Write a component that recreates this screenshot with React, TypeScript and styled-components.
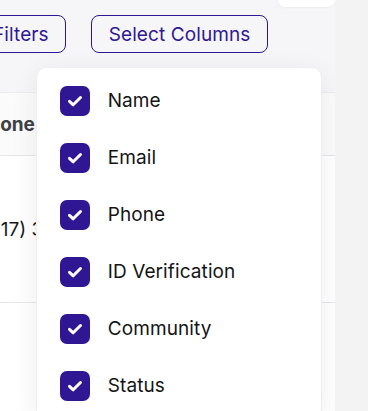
import React, { useState } from 'react';
import styled, { createGlobalStyle } from 'styled-components';

const GlobalStyle = createGlobalStyle`
  html, body {
    margin: 0;
    padding: 0;
    background: #f3f3f4;
    font-family: Inter, "Liberation Sans", sans-serif;
  }
`;

const Page = styled.div`
  position: relative;
  width: 335px;
  height: 411px;
  overflow: hidden;
  background: #f6f6f8;
`;

const TopStrip = styled.div`
  height: 7px;
  display: flex;
`;

const SearchStub = styled.div`
  margin-left: 278px;
  width: 57px;
  height: 7px;
  background: #fff;
  border-radius: 0 0 10px 10px;
  box-shadow: 0 1px 2px rgba(0, 0, 0, 0.05);
`;

const Toolbar = styled.div`
  display: flex;
  align-items: flex-start;
  gap: 25px;
  margin-top: 8px;
  margin-left: -24px;
`;

const OutlineButton = styled.button<{ $wide?: boolean }>`
  height: 38px;
  padding: 0 ${p => (p.$wide ? '17px' : '16px')};
  border: 1.5px solid #2f1794;
  border-radius: 8px;
  background: transparent;
  color: #2f1794;
  font-family: Inter, "Liberation Sans", sans-serif;
  font-size: 19px;
  letter-spacing: 0.1px;
  line-height: 1;
  cursor: pointer;
  white-space: nowrap;
`;

const ColumnsWrap = styled.div`
  position: relative;
`;

const Dropdown = styled.div`
  position: absolute;
  top: 52px;
  left: -55px;
  width: 284px;
  padding: 4px 0;
  background: #fff;
  border-radius: 10px;
  border: 1px solid #eeeef2;
  box-shadow: 0 6px 28px rgba(0, 0, 0, 0.07);
  z-index: 2;
`;

const Option = styled.label`
  display: flex;
  align-items: center;
  gap: 18px;
  height: 57px;
  padding-left: 23px;
  font-size: 19px;
  letter-spacing: 0.1px;
  color: #141416;
  cursor: pointer;
`;

const Box = styled.span<{ $checked: boolean }>`
  width: 30px;
  height: 30px;
  border-radius: 7px;
  display: flex;
  align-items: center;
  justify-content: center;
  background: ${p => (p.$checked ? '#2f1794' : '#fff')};
  border: ${p => (p.$checked ? 'none' : '1.5px solid #c4c4cc')};
  box-sizing: border-box;
`;

const TableCard = styled.div`
  margin-top: 39px;
  margin-left: -40px;
  width: 375px;
  background: #fff;
  border-top: 1px solid #ececef;
`;

const HeadRow = styled.div`
  height: 62px;
  display: flex;
  align-items: center;
  padding-left: 16px;
  background: #fbfbfb;
  border-bottom: 1px solid #e6e6ea;
`;

const HeadCell = styled.span`
  font-size: 19px;
  font-weight: 700;
  color: #3f3f46;
`;

const BodyRow = styled.div`
  height: 146px;
  display: flex;
  align-items: center;
  padding-left: 22px;
  border-bottom: 1px solid #e6e6ea;
`;

const Cell = styled.span`
  font-size: 19px;
  color: #18181b;
  white-space: nowrap;
`;

const columns = ['Name', 'Email', 'Phone', 'ID Verification', 'Community', 'Status'];

const Check = () => (
  <svg width="30" height="30" viewBox="0 0 30 30">
    <path d="M9.5 15.3 L13.2 18.8 L20.5 11.5" fill="none" stroke="#fff" strokeWidth="3" strokeLinecap="round" strokeLinejoin="round" />
  </svg>
);

export default function App() {
  const [checked, setChecked] = useState<Record<string, boolean>>(
    Object.fromEntries(columns.map(c => [c, true]))
  );

  return (
    <>
      <GlobalStyle />
      <Page>
        <TopStrip>
          <SearchStub />
        </TopStrip>
        <Toolbar>
          <OutlineButton>Filters</OutlineButton>
          <ColumnsWrap>
            <OutlineButton $wide>Select Columns</OutlineButton>
            <Dropdown>
              {columns.map(c => (
                <Option key={c} onClick={() => setChecked({ ...checked, [c]: !checked[c] })}>
                  <Box $checked={checked[c]}>{checked[c] && <Check />}</Box>
                  {c}
                </Option>
              ))}
            </Dropdown>
          </ColumnsWrap>
        </Toolbar>
        <TableCard>
          <HeadRow>
            <HeadCell>Phone</HeadCell>
          </HeadRow>
          <BodyRow>
            <Cell>(917) 382-4410</Cell>
          </BodyRow>
          <BodyRow />
        </TableCard>
      </Page>
    </>
  );
}
